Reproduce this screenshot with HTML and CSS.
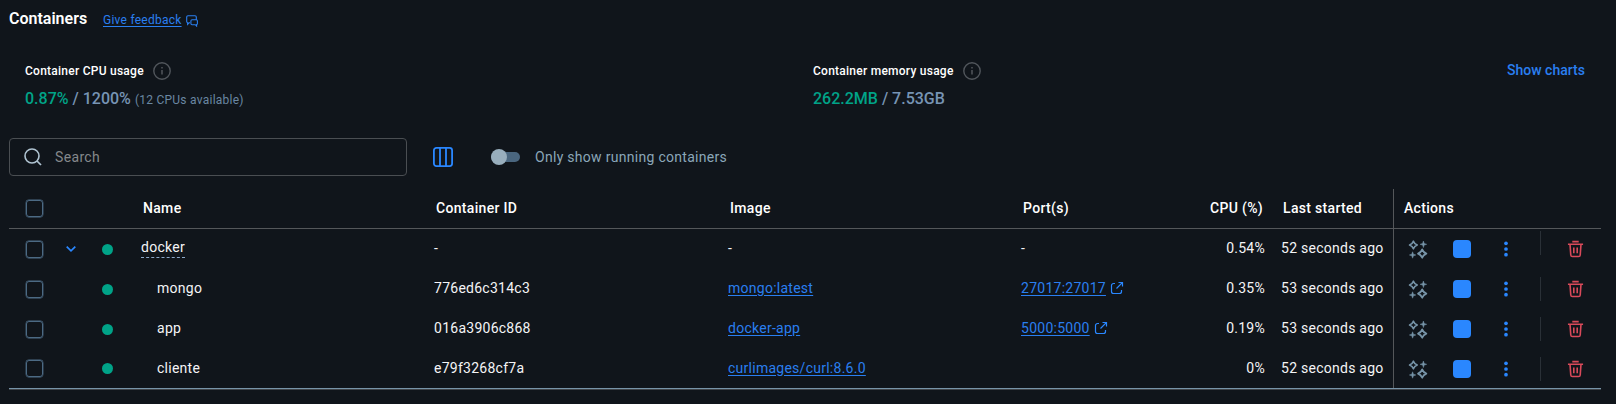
FILE: index.html
```html
<!DOCTYPE html>
<html lang="en">
<head>
<meta charset="utf-8">
<title>Containers</title>
<link rel="stylesheet" href="styles.css">
</head>
<body>
<svg class="sprite" aria-hidden="true">
  <symbol id="info" viewBox="0 0 18 18"><circle cx="9" cy="9" r="8.2" fill="none" stroke="currentColor" stroke-width="1.4"/><path d="M9 8v4.6M9 5v1.6" stroke="currentColor" stroke-width="1.5"/></symbol>
  <symbol id="external" viewBox="0 0 14 14"><path d="M5 2.5H3.5a2 2 0 0 0-2 2v6a2 2 0 0 0 2 2h6a2 2 0 0 0 2-2V9M8.5 1.5h4v4M12.3 1.7L6.500 7.500" fill="none" stroke="currentColor" stroke-width="1.2"/></symbol>
  <symbol id="sparkles" viewBox="0 0 20 20"><path d="M5.4 2.2Q6.4 5 9.2 6Q6.4 7 5.4 9.8Q4.4 7 1.6 6Q4.4 5 5.4 2.2ZM14.2 10.4Q15.3 13.5 18.4 14.6Q15.3 15.7 14.2 18.8Q13.1 15.7 10 14.6Q13.1 13.5 14.2 10.4Z" fill="none" stroke="currentColor" stroke-width="1.7" stroke-linejoin="round"/><path d="M15.4 2l.8 2.5 2.5.8-2.5.8-.8 2.5-.8-2.5-2.5-.8 2.500-.8zM4.6 12.8l.8 2.4 2.4.8-2.4.8-.8 2.4-.8-2.4-2.4-.8 2.4-.8z" fill="currentColor" stroke="currentColor" stroke-width=".5"/></symbol>
  <symbol id="dots" viewBox="0 0 6 16"><circle cx="3" cy="2.3" r="1.85"/><circle cx="3" cy="8" r="1.85"/><circle cx="3" cy="13.7" r="1.85"/></symbol>
  <symbol id="trash" viewBox="0 0 18 18"><path d="M5.6 1.2h6.8M1 4h16M3.2 4.2l.8 11.1q.1 1.7 1.8 1.7h6.4q1.7 0 1.8-1.7l.8-11.1M7.2 7.4v6M10.8 7.4v6" fill="none" stroke="currentColor" stroke-width="1.7"/></symbol>
</svg>

<header class="title-bar">
  <h1 class="title">Containers</h1>
  <a class="link feedback">Give feedback</a>
  <svg class="feedback-icon" viewBox="0 0 12 12"><path d="M4 7.8H3L1.6 9.4V7.7Q.7 7.3.7 6.4V2Q.7.7 2 .7h7Q10.3.7 10.3 2v2.400M6 4.800h4.300q1.100 0 1.100 1.100v2.600q0 .9-.8 1.100v1.500L9.300 9.700H6q-1.100 0-1.100-1.100V5.900Q4.900 4.800 6 4.800z" fill="none" stroke="currentColor" stroke-width="1.1"/></svg>
</header>

<section class="stats">
  <div class="stat">
    <div class="stat-label">Container CPU usage <svg class="info"><use href="#info"/></svg></div>
    <div class="stat-value"><span class="used">0.87%</span><span class="limit"> / 1200%</span><span class="note">(12 CPUs available)</span></div>
  </div>
  <div class="stat">
    <div class="stat-label">Container memory usage <svg class="info"><use href="#info"/></svg></div>
    <div class="stat-value"><span class="used">262.2MB</span><span class="limit"> / 7.53GB</span></div>
  </div>
  <a class="show-charts">Show charts</a>
</section>

<div class="toolbar">
  <div class="search">
    <svg class="search-icon" viewBox="0 0 18 18"><circle cx="8" cy="8" r="7" fill="none" stroke="currentColor" stroke-width="1.6"/><path d="M13 13l4 4" stroke="currentColor" stroke-width="1.7"/></svg>
    <span class="placeholder">Search</span>
  </div>
  <svg class="columns-icon" viewBox="0 0 20 20"><rect x=".9" y=".9" width="18.2" height="18.2" rx="2.5" fill="none" stroke="currentColor" stroke-width="1.8"/><path d="M7 1v18M13 1v18" stroke="currentColor" stroke-width="1.8"/></svg>
  <span class="switch"><span class="knob"></span></span>
  <span class="switch-label">Only show running containers</span>
</div>

<main class="table">
  <div class="row head">
    <div class="cell check"><span class="box"></span></div><div></div><div></div>
    <div class="cell">Name</div><div class="cell">Container ID</div><div class="cell">Image</div><div class="cell">Port(s)</div>
    <div class="cell num">CPU (%)</div><div class="cell">Last started</div><div class="cell actions">Actions</div>
  </div>
  <div class="row group">
    <div class="cell check"><span class="box"></span></div>
    <div class="center"><svg class="caret" viewBox="0 0 10 6"><path d="M.7.7L5 4.8 9.3.7" fill="none" stroke="currentColor" stroke-width="1.7"/></svg></div>
    <div class="center"><span class="dot"></span></div>
    <div class="cell"><span class="group-name">docker</span></div><div class="cell">-</div><div class="cell">-</div><div class="cell">-</div>
    <div class="cell num">0.54%</div><div class="cell">52 seconds ago</div>
    <div class="actions"><svg class="sparkles"><use href="#sparkles"/></svg><span class="stop"></span><svg class="dots"><use href="#dots"/></svg><span class="divider"></span><svg class="trash"><use href="#trash"/></svg></div>
  </div>
  <div class="row">
    <div class="cell check"><span class="box"></span></div><div></div>
    <div class="center"><span class="dot"></span></div>
    <div class="cell child">mongo</div><div class="cell">776ed6c314c3</div><div class="cell"><a class="link">mongo:latest</a></div><div class="cell"><a class="link">27017:27017</a><svg class="external"><use href="#external"/></svg></div>
    <div class="cell num">0.35%</div><div class="cell">53 seconds ago</div>
    <div class="actions"><svg class="sparkles"><use href="#sparkles"/></svg><span class="stop"></span><svg class="dots"><use href="#dots"/></svg><span class="divider"></span><svg class="trash"><use href="#trash"/></svg></div>
  </div>
  <div class="row">
    <div class="cell check"><span class="box"></span></div><div></div>
    <div class="center"><span class="dot"></span></div>
    <div class="cell child">app</div><div class="cell">016a3906c868</div><div class="cell"><a class="link">docker-app</a></div><div class="cell"><a class="link">5000:5000</a><svg class="external"><use href="#external"/></svg></div>
    <div class="cell num">0.19%</div><div class="cell">53 seconds ago</div>
    <div class="actions"><svg class="sparkles"><use href="#sparkles"/></svg><span class="stop"></span><svg class="dots"><use href="#dots"/></svg><span class="divider"></span><svg class="trash"><use href="#trash"/></svg></div>
  </div>
  <div class="row">
    <div class="cell check"><span class="box"></span></div><div></div>
    <div class="center"><span class="dot"></span></div>
    <div class="cell child">cliente</div><div class="cell">e79f3268cf7a</div><div class="cell"><a class="link">curlimages/curl:8.6.0</a></div><div class="cell"></div>
    <div class="cell num">0%</div><div class="cell">52 seconds ago</div>
    <div class="actions"><svg class="sparkles"><use href="#sparkles"/></svg><span class="stop"></span><svg class="dots"><use href="#dots"/></svg><span class="divider"></span><svg class="trash"><use href="#trash"/></svg></div>
  </div>
</main>
</body>
</html>
```
FILE: styles.css
```css
* { box-sizing: border-box; }
body {
  margin: 0;
  height: 404px;
  padding: 0 15px 0 9px;
  overflow: hidden;
  background: #10151b;
  color: #f4f4f6;
  font: 400 14px/20px Roboto, sans-serif;
}
svg { display: block; flex: none; }
.sprite { position: absolute; width: 0; height: 0; }
.link { color: #2a7ff0; text-decoration: underline; text-underline-offset: 2px; }

.title-bar { display: flex; height: 38px; padding-top: 8px; }
.title { margin: 0; width: 94px; font-size: 16px; line-height: 22px; font-weight: 600; color: #fff; }
.feedback { width: 83px; font-size: 12px; line-height: 24px; letter-spacing: .25px; white-space: nowrap; }
.feedback-icon { width: 12px; height: 12px; margin-top: 7px; color: #2a7ff0; }

.stats { display: flex; height: 100px; padding: 23px 16px 0; }
.stat { width: 788px; flex: none; }
.stat:nth-child(2) { width: 694px; }
.stat-label { display: flex; align-items: center; gap: 9px; height: 20px; font-size: 12px; font-weight: 500; letter-spacing: .25px; color: #fff; }
.info { width: 18px; height: 18px; color: #51565c; }
.stat-value { height: 24px; margin-top: 7px; font-size: 16px; line-height: 22px; font-weight: 500; white-space: pre; }
.used { color: #00a388; }
.limit { color: #7794b4; }
.note { margin-left: 4px; color: #6a87a2; font-size: 12px; font-weight: 400; letter-spacing: .25px; }
.show-charts { font-weight: 500; color: #2a7ff0; white-space: nowrap; margin-top: -1px; }

.toolbar { display: flex; align-items: center; height: 38px; }
.search { display: flex; align-items: center; gap: 13px; width: 398px; height: 38px; padding-left: 14px; border: 1px solid #4a4e52; border-radius: 4px; }
.search-icon { width: 18px; height: 18px; color: #b0c4d2; }
.placeholder { color: #85888b; letter-spacing: .35px; }
.columns-icon { width: 20px; height: 20px; margin-left: 26px; color: #2a87ff; }
.switch { display: flex; align-items: center; width: 29px; height: 10px; margin-left: 38px; border-radius: 5px; background: #4a667f; }
.knob { width: 16px; height: 16px; border-radius: 50%; background: #98aebd; }
.switch-label { margin-left: 15px; color: #8ba7b9; letter-spacing: .29px; }

.table { margin-top: 13px; border-bottom: 1px solid #7794a8; box-shadow: 0 1px #3f444a; letter-spacing: .26px; }
.row { display: grid; grid-template-columns: 48px 28px 46px 293px 294px 293px 189px 71px 122px 208px; height: 40px; }
.head { border-bottom: 1px solid #54575a; font-weight: 500; letter-spacing: .32px; color: #fff; }
.row:last-child { height: 39px; }
.cell { display: flex; align-items: center; padding: 0 0 2px 10px; white-space: nowrap; }
.head .cell { padding: 0 0 1px 12px; }
.num.cell { justify-content: flex-end; padding-right: 6px; padding-left: 0; }
.head .num.cell { padding-right: 8px; }
.head .actions.cell { padding-left: 10px; }
.cell.check, .head .cell.check { padding: 0 0 0 16.5px; }
.center { display: flex; align-items: center; justify-content: center; padding-right: 1px; }
.box { width: 17px; height: 17px; border: 1.5px solid #4c6a84; border-radius: 3px; box-shadow: 0 0 0 .4px #4c6a84; }
.caret { width: 10px; height: 6px; color: #2a87ff; }
.dot { width: 11px; height: 11px; border-radius: 50%; background: #00a388; }
.cell.child { padding-left: 26px; }
.group-name { line-height: 19px; border-bottom: 1px dashed #8ba7c8; }
.external { width: 14px; height: 14px; margin-left: 4px; color: #2a87ff; }

.actions { display: flex; align-items: center; border-left: 1px solid #54575a; }
.sparkles { width: 20px; height: 20px; margin-left: 14px; color: #7794a8; }
.stop { width: 18px; height: 18px; margin-left: 25px; border-radius: 4px; background: #2a87ff; }
.dots { width: 6px; height: 16px; margin-left: 32px; fill: #2a87ff; }
.divider { width: 1px; height: 24px; margin-left: 31px; background: #2a3037; }
.group .divider { margin-bottom: 12px; }
.trash { width: 17px; height: 18px; margin-left: 26px; color: #d94a5a; }
```
